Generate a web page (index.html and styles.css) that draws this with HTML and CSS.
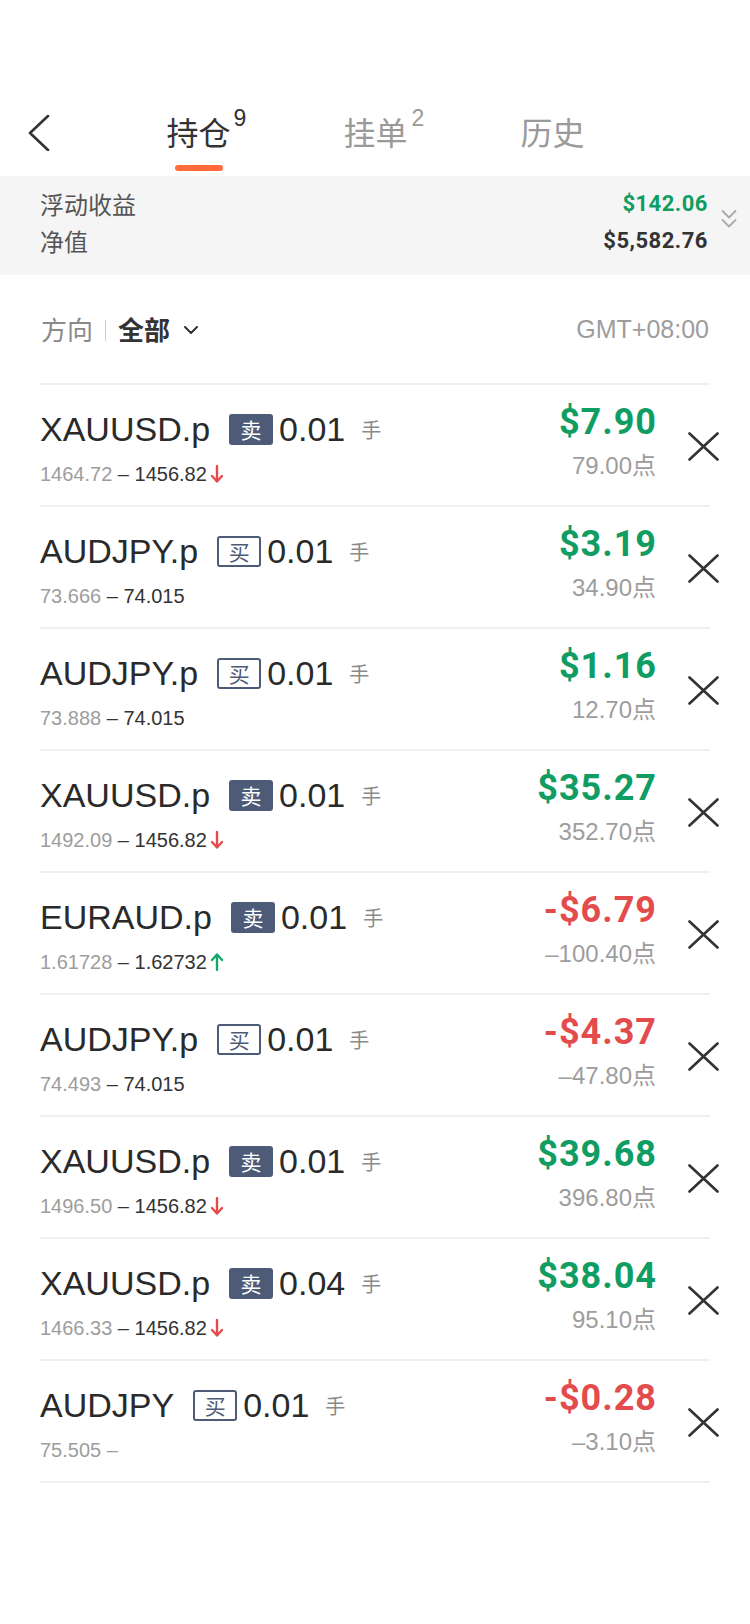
FILE: index.html
```html
<!DOCTYPE html>
<html lang="zh">
<head>
<meta charset="utf-8">
<title>持仓</title>
<link rel="stylesheet" href="styles.css">
</head>
<body>
<div class="page">
  <header class="topbar">
    <div class="back">
      <svg width="22" height="36" viewBox="0 0 22 36"><path d="M20 1 L2 18 L20 35" fill="none" stroke="#333" stroke-width="2.6" stroke-linecap="round" stroke-linejoin="round"/></svg>
    </div>
    <div class="tab active">
      <div class="tab-label"><span class="tab-text">持仓<span class="sup">9</span></span></div>
      <div class="tab-bar"></div>
    </div>
    <div class="tab">
      <div class="tab-label"><span class="tab-text">挂单<span class="sup sup2">2</span></span></div>
    </div>
    <div class="tab">
      <div class="tab-label"><span class="tab-text">历史</span></div>
    </div>
  </header>

  <section class="summary">
    <div class="sum-labels">
      <div class="sum-line">浮动收益</div>
      <div class="sum-line">净值</div>
    </div>
    <div class="sum-values">
      <div class="sum-line num green">$142.06</div>
      <div class="sum-line num">$5,582.76</div>
    </div>
    <svg class="sum-chev" width="16" height="20" viewBox="0 0 16 20"><path d="M1.5 2 L8 8.5 L14.5 2 M1.5 11 L8 17.5 L14.5 11" fill="none" stroke="#aaa" stroke-width="1.8" stroke-linecap="round" stroke-linejoin="round"/></svg>
  </section>

  <section class="filter">
    <div class="filter-left">
      <span class="f-label">方向</span>
      <span class="f-sep"></span>
      <span class="f-value">全部</span>
      <svg class="f-chev" width="14" height="8" viewBox="0 0 14 8"><path d="M1 1 L7 7 L13 1" fill="none" stroke="#333" stroke-width="2" stroke-linecap="round" stroke-linejoin="round"/></svg>
    </div>
    <div class="gmt">GMT+08:00</div>
  </section>

  <ul class="list">
    <li class="row">
      <div class="left">
        <div class="line1"><span class="sym">XAUUSD.p</span><span class="badge sell">卖</span><span class="qty">0.01</span><span class="hand">手</span></div>
        <div class="line2"><span class="open">1464.72</span><span class="cur"> – 1456.82</span><svg class="arr" width="12" height="18" viewBox="0 0 12 18"><path d="M6 1 V16 M1 11 L6 16.5 L11 11" fill="none" stroke="#e64b4b" stroke-width="2.4" stroke-linecap="round" stroke-linejoin="round"/></svg></div>
      </div>
      <div class="right">
        <div class="amt green">$7.90</div>
        <div class="pts">79.00点</div>
      </div>
      <svg class="close" width="31" height="29" viewBox="0 0 31 29"><path d="M1.5 1.5 L29.5 27.5 M29.5 1.5 L1.5 27.5" stroke="#333" stroke-width="2.6" stroke-linecap="round"/></svg>
    </li>
    <li class="row">
      <div class="left">
        <div class="line1"><span class="sym">AUDJPY.p</span><span class="badge buy">买</span><span class="qty">0.01</span><span class="hand">手</span></div>
        <div class="line2"><span class="open">73.666</span><span class="cur"> – 74.015</span></div>
      </div>
      <div class="right">
        <div class="amt green">$3.19</div>
        <div class="pts">34.90点</div>
      </div>
      <svg class="close" width="31" height="29" viewBox="0 0 31 29"><path d="M1.5 1.5 L29.5 27.5 M29.5 1.5 L1.5 27.5" stroke="#333" stroke-width="2.6" stroke-linecap="round"/></svg>
    </li>
    <li class="row">
      <div class="left">
        <div class="line1"><span class="sym">AUDJPY.p</span><span class="badge buy">买</span><span class="qty">0.01</span><span class="hand">手</span></div>
        <div class="line2"><span class="open">73.888</span><span class="cur"> – 74.015</span></div>
      </div>
      <div class="right">
        <div class="amt green">$1.16</div>
        <div class="pts">12.70点</div>
      </div>
      <svg class="close" width="31" height="29" viewBox="0 0 31 29"><path d="M1.5 1.5 L29.5 27.5 M29.5 1.5 L1.5 27.5" stroke="#333" stroke-width="2.6" stroke-linecap="round"/></svg>
    </li>
    <li class="row">
      <div class="left">
        <div class="line1"><span class="sym">XAUUSD.p</span><span class="badge sell">卖</span><span class="qty">0.01</span><span class="hand">手</span></div>
        <div class="line2"><span class="open">1492.09</span><span class="cur"> – 1456.82</span><svg class="arr" width="12" height="18" viewBox="0 0 12 18"><path d="M6 1 V16 M1 11 L6 16.5 L11 11" fill="none" stroke="#e64b4b" stroke-width="2.4" stroke-linecap="round" stroke-linejoin="round"/></svg></div>
      </div>
      <div class="right">
        <div class="amt green">$35.27</div>
        <div class="pts">352.70点</div>
      </div>
      <svg class="close" width="31" height="29" viewBox="0 0 31 29"><path d="M1.5 1.5 L29.5 27.5 M29.5 1.5 L1.5 27.5" stroke="#333" stroke-width="2.6" stroke-linecap="round"/></svg>
    </li>
    <li class="row">
      <div class="left">
        <div class="line1"><span class="sym">EURAUD.p</span><span class="badge sell">卖</span><span class="qty">0.01</span><span class="hand">手</span></div>
        <div class="line2"><span class="open">1.61728</span><span class="cur"> – 1.62732</span><svg class="arr" width="12" height="18" viewBox="0 0 12 18"><path d="M6 17 V2 M1 7 L6 1.5 L11 7" fill="none" stroke="#14a86c" stroke-width="2.4" stroke-linecap="round" stroke-linejoin="round"/></svg></div>
      </div>
      <div class="right">
        <div class="amt red">-$6.79</div>
        <div class="pts">–100.40点</div>
      </div>
      <svg class="close" width="31" height="29" viewBox="0 0 31 29"><path d="M1.5 1.5 L29.5 27.5 M29.5 1.5 L1.5 27.5" stroke="#333" stroke-width="2.6" stroke-linecap="round"/></svg>
    </li>
    <li class="row">
      <div class="left">
        <div class="line1"><span class="sym">AUDJPY.p</span><span class="badge buy">买</span><span class="qty">0.01</span><span class="hand">手</span></div>
        <div class="line2"><span class="open">74.493</span><span class="cur"> – 74.015</span></div>
      </div>
      <div class="right">
        <div class="amt red">-$4.37</div>
        <div class="pts">–47.80点</div>
      </div>
      <svg class="close" width="31" height="29" viewBox="0 0 31 29"><path d="M1.5 1.5 L29.5 27.5 M29.5 1.5 L1.5 27.5" stroke="#333" stroke-width="2.6" stroke-linecap="round"/></svg>
    </li>
    <li class="row">
      <div class="left">
        <div class="line1"><span class="sym">XAUUSD.p</span><span class="badge sell">卖</span><span class="qty">0.01</span><span class="hand">手</span></div>
        <div class="line2"><span class="open">1496.50</span><span class="cur"> – 1456.82</span><svg class="arr" width="12" height="18" viewBox="0 0 12 18"><path d="M6 1 V16 M1 11 L6 16.5 L11 11" fill="none" stroke="#e64b4b" stroke-width="2.4" stroke-linecap="round" stroke-linejoin="round"/></svg></div>
      </div>
      <div class="right">
        <div class="amt green">$39.68</div>
        <div class="pts">396.80点</div>
      </div>
      <svg class="close" width="31" height="29" viewBox="0 0 31 29"><path d="M1.5 1.5 L29.5 27.5 M29.5 1.5 L1.5 27.5" stroke="#333" stroke-width="2.6" stroke-linecap="round"/></svg>
    </li>
    <li class="row">
      <div class="left">
        <div class="line1"><span class="sym">XAUUSD.p</span><span class="badge sell">卖</span><span class="qty">0.04</span><span class="hand">手</span></div>
        <div class="line2"><span class="open">1466.33</span><span class="cur"> – 1456.82</span><svg class="arr" width="12" height="18" viewBox="0 0 12 18"><path d="M6 1 V16 M1 11 L6 16.5 L11 11" fill="none" stroke="#e64b4b" stroke-width="2.4" stroke-linecap="round" stroke-linejoin="round"/></svg></div>
      </div>
      <div class="right">
        <div class="amt green">$38.04</div>
        <div class="pts">95.10点</div>
      </div>
      <svg class="close" width="31" height="29" viewBox="0 0 31 29"><path d="M1.5 1.5 L29.5 27.5 M29.5 1.5 L1.5 27.5" stroke="#333" stroke-width="2.6" stroke-linecap="round"/></svg>
    </li>
    <li class="row">
      <div class="left">
        <div class="line1"><span class="sym">AUDJPY</span><span class="badge buy">买</span><span class="qty">0.01</span><span class="hand">手</span></div>
        <div class="line2"><span class="open">75.505 –</span></div>
      </div>
      <div class="right">
        <div class="amt red">-$0.28</div>
        <div class="pts">–3.10点</div>
      </div>
      <svg class="close" width="31" height="29" viewBox="0 0 31 29"><path d="M1.5 1.5 L29.5 27.5 M29.5 1.5 L1.5 27.5" stroke="#333" stroke-width="2.6" stroke-linecap="round"/></svg>
    </li>
  </ul>
</div>
</body>
</html>
```

FILE: styles.css
```css
* { box-sizing: border-box; }
html, body { margin: 0; padding: 0; background: #fff; }
body {
  font-family: "Liberation Sans", "Noto Sans CJK SC", sans-serif;
  color: #333;
}
.page { width: 750px; min-height: 1624px; background: #fff; }

/* top bar */
.topbar {
  height: 176px;
  padding-top: 106px;
  display: flex;
  align-items: flex-start;
}
.back {
  width: 110px;
  height: 50px;
  padding-left: 28px;
  display: flex;
  align-items: center;
}
.back svg { display: block; margin-top: 4px; }
.tab {
  width: 177px;
  display: flex;
  flex-direction: column;
  align-items: center;
}
.tab-label {
  height: 50px;
  display: flex;
  align-items: center;
}
.tab-text {
  position: relative;
  display: inline-block;
  font-family: "Noto Sans CJK SC", sans-serif;
  font-size: 32px;
  line-height: 36px;
  color: #9a9a9a;
}
.tab.active .tab-text { color: #333; }
.sup {
  position: absolute;
  left: calc(100% + 3px);
  top: -6px;
  font-family: "Liberation Sans", sans-serif;
  font-size: 23px;
  line-height: 23px;
}
.sup2 { left: calc(100% + 4px); }
.tab-bar {
  width: 48px;
  height: 6px;
  margin-top: 9px;
  border-radius: 3px;
  background: #ff6b3b;
}

/* summary band */
.summary {
  background: #f5f5f5;
  height: 99px;
  padding: 14px 13px 20px 40px;
  display: flex;
  align-items: flex-start;
}
.sum-labels { flex: 1; display: flex; flex-direction: column; gap: 9px; }
.sum-values { display: flex; flex-direction: column; align-items: flex-end; gap: 9px; }
.sum-line {
  height: 28px;
  line-height: 28px;
  font-family: "Noto Sans CJK SC", sans-serif;
  font-size: 24px;
  color: #555;
}
.sum-line.num {
  font-family: "Roboto", "Liberation Sans", sans-serif;
  font-weight: 700;
  font-size: 22px;
  letter-spacing: 0.5px;
  color: #333;
}
.sum-line.num.green { color: #0f9d63; }
.sum-chev { margin-left: 13px; align-self: center; margin-top: -8px; }

/* filter */
.filter {
  height: 108px;
  padding: 0 41px 0 40px;
  display: flex;
  align-items: center;
  justify-content: space-between;
}
.filter-left { display: flex; align-items: center; }
.f-label {
  font-family: "Noto Sans CJK SC", sans-serif;
  font-size: 26px;
  line-height: 30px;
  color: #8a8a8a;
  margin-left: 1px;
}
.f-sep {
  width: 1px;
  height: 21px;
  background: #cfcfcf;
  margin: 2px 12px 0 12px;
}
.f-value {
  font-family: "Noto Sans CJK SC", sans-serif;
  font-size: 26px;
  line-height: 30px;
  font-weight: 700;
  color: #333;
}
.f-chev { margin-left: 14px; margin-top: 2px; }
.gmt {
  font-size: 25px;
  color: #9d9d9d;
  line-height: 30px;
}

/* list */
.list {
  list-style: none;
  margin: 0 40px;
  padding: 0;
  border-top: 2px solid #f0f0f0;
}
.row {
  height: 122px;
  border-bottom: 2px solid #f0f0f0;
  display: flex;
  align-items: flex-start;
}
.left { flex: 1; padding-top: 24px; }
.line1 { display: flex; align-items: center; height: 40px; }
.sym { font-size: 34px; line-height: 40px; color: #2a2a2a; }
.badge {
  width: 44px;
  height: 31px;
  margin-left: 19px;
  border-radius: 3px;
  display: flex;
  align-items: center;
  justify-content: center;
  font-family: "Noto Sans CJK SC", sans-serif;
  font-size: 21px;
  line-height: 1;
}
.badge.sell { background: #4d5b79; color: #fff; }
.badge.buy { background: #fff; color: #4d5b79; border: 2px solid #4d5b79; }
.qty { font-size: 34px; line-height: 40px; color: #2a2a2a; margin-left: 6px; }
.hand {
  font-family: "Noto Sans CJK SC", sans-serif;
  font-size: 20px;
  color: #8a8a8a;
  margin-left: 16px;
}
.line2 {
  display: flex;
  align-items: center;
  height: 24px;
  margin-top: 13px;
  font-size: 20px;
  line-height: 24px;
}
.open { color: #9d9d9d; white-space: pre; }
.cur { color: #333; white-space: pre; }
.arr { margin-left: 4px; }

.right {
  padding-top: 17px;
  display: flex;
  flex-direction: column;
  align-items: flex-end;
  margin-right: 32px;
}
.amt {
  font-family: "Roboto", "Liberation Sans", sans-serif;
  font-weight: 700;
  font-size: 36px;
  line-height: 40px;
  letter-spacing: 1px;
  margin-right: -1px;
}
.green { color: #0f9d63; }
.red { color: #e34b4c; }
.pts {
  margin-top: 10px;
  font-size: 24px;
  line-height: 28px;
  color: #9d9d9d;
}
.close {
  align-self: center;
  margin-top: 2px;
  margin-right: -9px;
  flex: none;
}
```
